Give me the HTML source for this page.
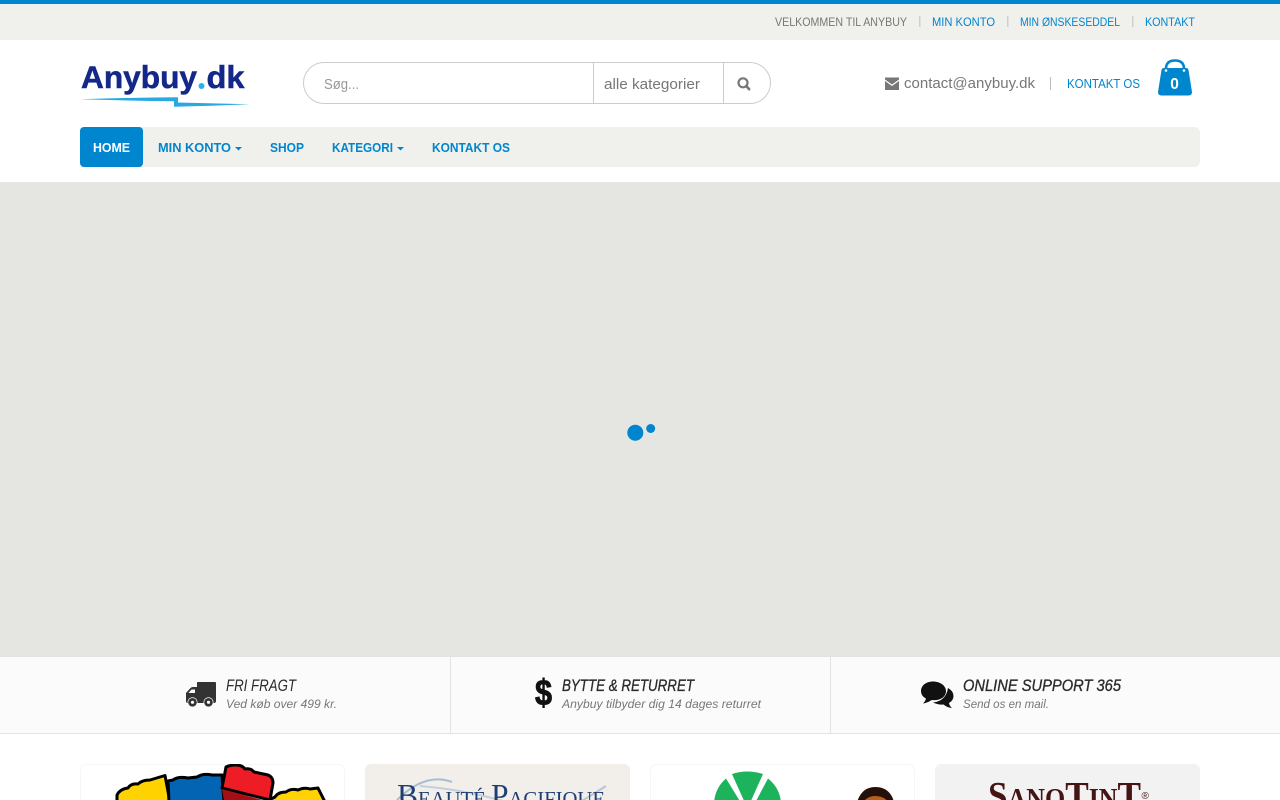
<!DOCTYPE html>
<html lang="da">
<head>
<meta charset="utf-8">
<title>Anybuy.dk</title>
<style>
html,body{margin:0;padding:0;background:#fff;width:1280px;height:800px;overflow:hidden}
svg{display:block}
text{font-family:"Liberation Sans",sans-serif}
.top{font-size:12px}
.blue{fill:#0085cf}
.grey{fill:#777}
.nav{font-size:12.5px;font-weight:bold;fill:#0085cf}
.h{font-size:17px;font-style:italic;fill:#2b2b2b}
.hb{stroke:#2b2b2b;stroke-width:.35px}
.s{font-size:12px;font-style:italic;fill:#777}
.serif{font-family:"Liberation Serif",serif}
</style>
</head>
<body>
<svg width="1280" height="800" viewBox="0 0 1280 800" xmlns="http://www.w3.org/2000/svg">
<defs>
<clipPath id="c1"><rect x="80" y="764" width="265" height="36"/></clipPath>
<clipPath id="c2"><rect x="365" y="764" width="265" height="36"/></clipPath>
<clipPath id="c3"><rect x="650" y="764" width="265" height="36"/></clipPath>
<clipPath id="c4"><rect x="935" y="764" width="265" height="36"/></clipPath>
</defs>

<rect width="1280" height="800" fill="#fff"/>

<!-- top bar -->
<rect width="1280" height="40" fill="#f0f0ec"/>
<rect width="1280" height="4" fill="#0085cf"/>
<text class="top grey" x="775" y="26" textLength="132" lengthAdjust="spacingAndGlyphs">VELKOMMEN TIL ANYBUY</text>
<rect x="919" y="16" width="1.500" height="11" fill="#cfcfcf"/>
<text class="top blue" x="932" y="26" textLength="63" lengthAdjust="spacingAndGlyphs">MIN KONTO</text>
<rect x="1007" y="16" width="1.500" height="11" fill="#cfcfcf"/>
<text class="top blue" x="1020" y="26" textLength="100" lengthAdjust="spacingAndGlyphs">MIN ØNSKESEDDEL</text>
<rect x="1132" y="16" width="1.500" height="11" fill="#cfcfcf"/>
<text class="top blue" x="1145" y="26" textLength="50" lengthAdjust="spacingAndGlyphs">KONTAKT</text>

<!-- logo -->
<text x="81" y="88" font-size="31.500" font-weight="bold" fill="#14288a" stroke="#14288a" stroke-width=".5" textLength="116" lengthAdjust="spacingAndGlyphs">Anybuy</text>
<circle cx="201.500" cy="86" r="3" fill="#2eb0ea"/>
<text x="206.500" y="88" font-size="31.500" font-weight="bold" fill="#14288a" stroke="#14288a" stroke-width=".5" textLength="38" lengthAdjust="spacingAndGlyphs">dk</text>
<path d="M80 99.300 Q130 97.500 178 97.300 L178 102.500 L250 104.300 Q210 106 174 106.800 L174 101.300 Q130 100.700 80 99.300 Z" fill="#2aa8e2"/>

<!-- search -->
<rect x="303.500" y="62.500" width="467" height="41" rx="20.500" fill="#fff" stroke="#ccc"/>
<rect x="593" y="63" width="1" height="40" fill="#ccc"/>
<rect x="723" y="63" width="1" height="40" fill="#ccc"/>
<text x="324" y="89" font-size="14.500" fill="#999" textLength="35" lengthAdjust="spacingAndGlyphs">Søg...</text>
<text x="604" y="89" font-size="14.500" fill="#777" textLength="96" lengthAdjust="spacingAndGlyphs">alle kategorier</text>
<circle cx="743" cy="82.800" r="4.500" fill="none" stroke="#777" stroke-width="2.200"/>
<path d="M746.200 86 L749.200 89.200" stroke="#777" stroke-width="2.600" stroke-linecap="round"/>

<!-- contact -->
<path d="M885 77.500 H899 V79.500 L892 84.500 L885 79.500 Z" fill="#777"/>
<path d="M885 81 L892 86 L899 81 V90 H885 Z" fill="#777"/>
<text x="904" y="88" font-size="14.500" fill="#777" textLength="131" lengthAdjust="spacingAndGlyphs">contact@anybuy.dk</text>
<rect x="1050" y="77" width="1" height="13" fill="#bbb"/>
<text x="1067" y="88" font-size="12.500" class="blue" textLength="73" lengthAdjust="spacingAndGlyphs">KONTAKT OS</text>

<!-- bag -->
<path d="M1164 68 H1186 Q1188 68 1188.500 70 L1192 92 Q1192 95.500 1188.500 95.500 H1161.500 Q1158 95.500 1158 92 L1161.500 70 Q1162 68 1164 68 Z" fill="#0085cf"/>
<path d="M1166 70 V68 Q1166.500 60.500 1175 60.500 Q1183.500 60.500 1184 68 V70" fill="none" stroke="#0085cf" stroke-width="2.600"/>
<circle cx="1166" cy="70.500" r="1.300" fill="#fff"/>
<circle cx="1184" cy="70.500" r="1.300" fill="#fff"/>
<text x="1174.500" y="89" font-size="15.500" font-weight="bold" fill="#fff" text-anchor="middle">0</text>

<!-- nav -->
<rect x="80" y="127" width="1120" height="40" rx="6" fill="#f0f0ec"/>
<rect x="80" y="127" width="63" height="40" rx="4" fill="#0085cf"/>
<text class="nav" x="93" y="152" textLength="37" lengthAdjust="spacingAndGlyphs" style="fill:#fff">HOME</text>
<text class="nav" x="158" y="152" textLength="73" lengthAdjust="spacingAndGlyphs">MIN KONTO</text>
<path d="M235 147 H242 L238.500 150.500 Z" fill="#0085cf"/>
<text class="nav" x="270" y="152" textLength="34" lengthAdjust="spacingAndGlyphs">SHOP</text>
<text class="nav" x="332" y="152" textLength="61" lengthAdjust="spacingAndGlyphs">KATEGORI</text>
<path d="M397 147 H404 L400.500 150.500 Z" fill="#0085cf"/>
<text class="nav" x="432" y="152" textLength="78" lengthAdjust="spacingAndGlyphs">KONTAKT OS</text>

<!-- hero -->
<rect x="0" y="182" width="1280" height="474" fill="#e5e6e1"/>
<circle cx="635.300" cy="432.700" r="8" fill="#0085cf"/>
<circle cx="650.700" cy="428.500" r="4.500" fill="#0085cf"/>

<!-- features -->
<rect x="0" y="656" width="1280" height="78" fill="#fbfbfb"/>
<rect x="0" y="656" width="1280" height="1" fill="#e3e3e3"/>
<rect x="0" y="733" width="1280" height="1" fill="#e3e3e3"/>
<rect x="450" y="656" width="1" height="78" fill="#e3e3e3"/>
<rect x="830" y="656" width="1" height="78" fill="#e3e3e3"/>

<!-- truck -->
<path d="M197 682.500 Q197 682 198 682 H215 Q216 682 216 683 V701 Q216 703 214 703 H187.500 Q186 703 186 701 V693 L190.500 688 Q191.500 687 193 687 H197 Z" fill="#333"/>
<path d="M188.500 693 L191.500 689.500 H195 V693 Z" fill="#fbfbfb"/>
<circle cx="192.500" cy="702.300" r="5" fill="#fbfbfb"/>
<circle cx="192.500" cy="702.300" r="4.300" fill="#333"/>
<circle cx="192.500" cy="702.300" r="1.600" fill="#fbfbfb"/>
<circle cx="208.500" cy="702.300" r="5" fill="#fbfbfb"/>
<circle cx="208.500" cy="702.300" r="4.300" fill="#333"/>
<circle cx="208.500" cy="702.300" r="1.600" fill="#fbfbfb"/>
<text class="h" x="226" y="691" textLength="70" lengthAdjust="spacingAndGlyphs">FRI FRAGT</text>
<text class="s" x="226" y="708" textLength="111" lengthAdjust="spacingAndGlyphs">Ved køb over 499 kr.</text>

<!-- dollar -->
<text x="543.500" y="705" font-size="36" font-weight="bold" fill="#111" stroke="#111" stroke-width=".9" text-anchor="middle" textLength="17" lengthAdjust="spacingAndGlyphs">$</text>
<text class="h hb" x="562" y="691" textLength="132" lengthAdjust="spacingAndGlyphs">BYTTE &amp; RETURRET</text>
<text class="s" x="562" y="708" textLength="199" lengthAdjust="spacingAndGlyphs">Anybuy tilbyder dig 14 dages returret</text>

<!-- comments -->
<path d="M948 688 Q953.500 691 953.500 696 Q953.500 700.500 949 703 Q949.500 706 952 708 Q947 707.500 943.500 704.500 Q938 705 933 702.500 Q946 701 948 688 Z" fill="#111"/>
<path d="M933 681.500 C925.500 681.500 921 686 921 691 C921 694.500 923 697 926 698.500 C925.500 700.500 924.500 702 923 703.500 C927 703 930 701 932 700 C940 701 946 697 946 691 C946 686 940.500 681.500 933 681.500 Z" fill="#111"/>
<text class="h hb" x="963" y="691" textLength="158" lengthAdjust="spacingAndGlyphs">ONLINE SUPPORT 365</text>
<text class="s" x="963" y="708" textLength="86" lengthAdjust="spacingAndGlyphs">Send os en mail.</text>

<!-- brand card 1: bricks -->
<rect x="80.500" y="764.500" width="264" height="50" rx="6" fill="#fff" stroke="#f6f6f6"/>
<g clip-path="url(#c1)">
<path d="M117 802 L117 795 Q120 789 128 788 Q131 783 138 784 Q142 780 150 780 L165 775.500 L170 802 Z" fill="#ffd200" stroke="#000" stroke-width="3" stroke-linejoin="round"/>
<path d="M168 781 L173 780 Q178 776 188 778 L197 777 Q203 773 212 775 L222 775 L224 802 H169 Z" fill="#0464b4" stroke="#000" stroke-width="3" stroke-linejoin="round"/>
<path d="M226 767 Q230 765 236 765 Q242 765 245 769 Q251 768 254 772 L268 775 Q273 777 273 783 L270 800 L222 788 Z" fill="#ee1c25" stroke="#000" stroke-width="3" stroke-linejoin="round"/>
<path d="M222 789 L266 801 H224 Z" fill="#a50e14"/>
<path d="M265 802 L275 797 Q278 792 286 792 Q291 788 298 790 Q304 787 310 789 L318 788 L325 802 Z" fill="#ffd200" stroke="#000" stroke-width="3" stroke-linejoin="round"/>
</g>

<!-- brand card 2 -->
<g clip-path="url(#c2)">
<rect x="365" y="764" width="265" height="50" rx="6" fill="#f2efea"/>
<path d="M397 800 Q425 772 452 782" fill="none" stroke="#a9bdd2" stroke-width="2"/>
<path d="M420 786 Q470 790 520 806" fill="none" stroke="#c3cfdb" stroke-width="2"/>
<path d="M575 805 Q592 795 606 786" fill="none" stroke="#b7c5d6" stroke-width="2"/>
<text class="serif" x="397" y="806" font-size="21" fill="#1f3f73" textLength="208" lengthAdjust="spacingAndGlyphs"><tspan font-size="32">B</tspan>EAUTÉ <tspan font-size="32">P</tspan>ACIFIQUE</text>
</g>

<!-- brand card 3 -->
<rect x="650.500" y="764.500" width="264" height="50" rx="6" fill="#fff" stroke="#f6f6f6"/>
<g clip-path="url(#c3)">
<path d="M732 774 Q747 769 763 774 L750 803 H745 Z" fill="#1db35c"/>
<path d="M726 778.500 L741 803 H714 Q715 788 726 778.500 Z" fill="#1db35c"/>
<path d="M768 778.500 Q780 788 781 803 H755 Z" fill="#1db35c"/>
<path d="M857 802 Q862 787 875 787 Q890 787 894 802 Z" fill="#241008"/>
<path d="M863 802 Q868 796 875 796 Q884 796 888 802 Z" fill="#b5601c"/>
</g>

<!-- brand card 4 -->
<g clip-path="url(#c4)">
<rect x="935" y="764" width="265" height="50" rx="6" fill="#f2f2f2"/>
<text class="serif" x="988" y="808" font-size="28" font-weight="bold" fill="#451414" textLength="153" lengthAdjust="spacingAndGlyphs"><tspan font-size="38">S</tspan>ANO<tspan font-size="38">T</tspan>IN<tspan font-size="38">T</tspan></text>
<text x="1141.500" y="799" font-size="10" fill="#451414">®</text>
</g>
</svg>
</body>
</html>
